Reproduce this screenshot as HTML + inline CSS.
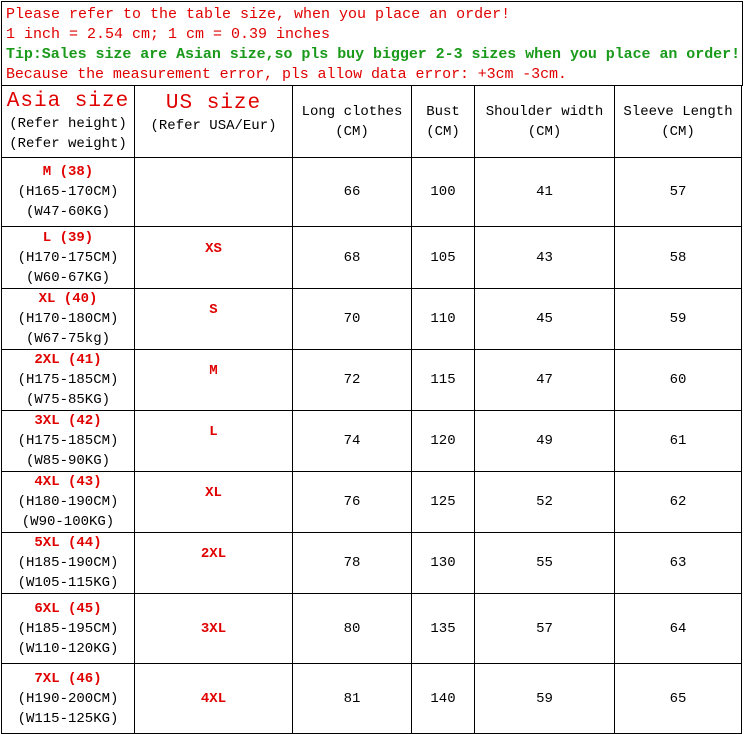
<!DOCTYPE html>
<html><head><meta charset="utf-8"><style>
body{margin:0;width:744px;height:734px;background:#fff;overflow:hidden;font-family:"Liberation Mono","Noto Sans CJK SC",monospace;}
.top{position:absolute;left:1px;top:1px;width:740px;height:84px;border:1px solid #000;border-bottom:none;}
.l{position:absolute;left:4px;font-size:15px;white-space:nowrap;line-height:20px;}
.r{color:#e00000}.g{color:#1a9a1a;font-weight:bold}
table{position:absolute;left:1px;top:85px;border-collapse:collapse;table-layout:fixed;}
td{border:1.5px solid #000;padding:0;text-align:center;vertical-align:middle;font-size:14px;line-height:20px;color:#000;}
.big{color:#e00000;font-size:21px;letter-spacing:1px;line-height:24px}
.sz{color:#e00000;font-weight:bold;}
</style></head><body>
<div class="top">
<div class="l r" style="top:3px">Please refer to the table size, when you place an order!</div>
<div class="l r" style="top:23px">1 inch = 2.54 cm; 1 cm = 0.39 inches</div>
<div class="l g" style="top:43px;letter-spacing:-0.05px">Tip:Sales size are Asian size,so pls buy bigger 2-3 sizes when you place an order!</div>
<div class="l r" style="top:63px;letter-spacing:-0.1px">Because the measurement error, pls allow data error: +3cm -3cm.</div>
</div>
<table>
<colgroup><col style="width:133px"><col style="width:158px"><col style="width:119px"><col style="width:63px"><col style="width:140px"><col style="width:127px"></colgroup>
<tr style="height:72px"><td><div class="big">Asia size</div>(Refer height)<br>(Refer weight)</td><td style="vertical-align:top;padding-top:6px"><div class="big">US size</div>(Refer USA/Eur)</td><td>Long clothes<br>(CM)</td><td>Bust<br>(CM)</td><td>Shoulder width<br>(CM)</td><td>Sleeve Length<br>(CM)</td></tr>
<tr style="height:69px"><td><span class="sz">M (38)</span><br>(H165-170CM)<br>(W47-60KG)</td><td></td><td>66</td><td>100</td><td>41</td><td>57</td></tr>
<tr style="height:62px"><td><span class="sz">L (39)</span><br>(H170-175CM)<br>(W60-67KG)</td><td class="sz" style="padding-bottom:18px">XS</td><td>68</td><td>105</td><td>43</td><td>58</td></tr>
<tr style="height:61px"><td><span class="sz">XL (40)</span><br>(H170-180CM)<br>(W67-75kg)</td><td class="sz" style="padding-bottom:18px">S</td><td>70</td><td>110</td><td>45</td><td>59</td></tr>
<tr style="height:61px"><td><span class="sz">2XL (41)</span><br>(H175-185CM)<br>(W75-85KG)</td><td class="sz" style="padding-bottom:18px">M</td><td>72</td><td>115</td><td>47</td><td>60</td></tr>
<tr style="height:61px"><td><span class="sz">3XL (42)</span><br>(H175-185CM)<br>(W85-90KG)</td><td class="sz" style="padding-bottom:18px">L</td><td>74</td><td>120</td><td>49</td><td>61</td></tr>
<tr style="height:61px"><td><span class="sz">4XL (43)</span><br>(H180-190CM)<br>(W90-100KG)</td><td class="sz" style="padding-bottom:18px">XL</td><td>76</td><td>125</td><td>52</td><td>62</td></tr>
<tr style="height:61px"><td><span class="sz">5XL (44)</span><br>(H185-190CM)<br>(W105-115KG)</td><td class="sz" style="padding-bottom:18px">2XL</td><td>78</td><td>130</td><td>55</td><td>63</td></tr>
<tr style="height:70px"><td><span class="sz">6XL (45)</span><br>(H185-195CM)<br>(W110-120KG)</td><td class="sz">3XL</td><td>80</td><td>135</td><td>57</td><td>64</td></tr>
<tr style="height:70px"><td><span class="sz">7XL (46)</span><br>(H190-200CM)<br>(W115-125KG)</td><td class="sz">4XL</td><td>81</td><td>140</td><td>59</td><td>65</td></tr>
</table>
</body></html>
